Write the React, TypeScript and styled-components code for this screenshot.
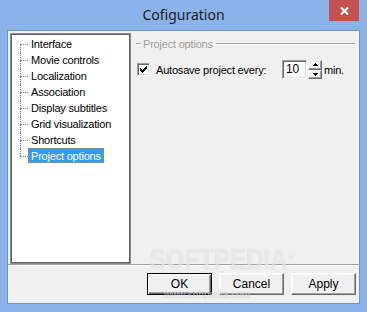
import React from "react";
import styled, { createGlobalStyle, css } from "styled-components";

const Global = createGlobalStyle`
  html, body { margin: 0; padding: 0; background: #8cb2ea; }
  body { width: 367px; height: 312px; overflow: hidden; }
  * { box-sizing: border-box; }
`;

const Window = styled.div`
  position: relative;
  width: 367px;
  height: 312px;
  background: #8cb2ea;
  display: flex;
  flex-direction: column;
  padding: 0 7px 8px 7px;
  font-family: "Liberation Sans", Arial, sans-serif;
  font-size: 11px;
  letter-spacing: -0.2px;
  color: #000;
`;

const TitleBar = styled.div`
  height: 30px;
  margin: 0 -7px;
  display: grid;
  grid-template-columns: 1fr auto 1fr;
  align-items: start;
`;

const Title = styled.div`
  grid-column: 2;
  font-family: "Noto Sans", "Open Sans", sans-serif;
  font-size: 14px;
  letter-spacing: 0;
  line-height: 29px;
  color: #1a1a1a;
`;

const CloseButton = styled.div`
  grid-column: 3;
  justify-self: end;
  margin-right: 8px;
  width: 30px;
  height: 21px;
  background: #c75050;
  display: flex;
  align-items: center;
  justify-content: center;
`;

const Client = styled.div`
  flex: 1;
  border: 1px solid #6f93cc;
  background: #f0f0f0;
  display: flex;
  flex-direction: column;
`;

const Main = styled.div`
  height: 233px;
  display: flex;
  padding: 2px 0 0 2px;
`;

const Sunken = css`
  border: 1px solid;
  border-color: #a0a0a0 #ffffff #ffffff #a0a0a0;
  box-shadow: inset 1px 1px #696969, inset -1px -1px #e3e3e3;
  background: #fff;
`;

const Tree = styled.div`
  width: 121px;
  height: 231px;
  border: 1px solid #8a8a8a;
  box-shadow: inset 0 0 0 1px #646464;
  background: #fff;
  padding: 2px;
`;

const TreeRow = styled.div<{ $first?: boolean; $last?: boolean }>`
  position: relative;
  height: 16px;
  display: flex;
  align-items: flex-start;
  padding-left: 7px;
  &::before {
    content: "";
    position: absolute;
    left: 7px;
    top: ${(p) => (p.$first ? 8 : 0)}px;
    bottom: ${(p) => (p.$last ? 8 : 0)}px;
    border-left: 1px dotted #808080;
  }
`;

const Connector = styled.span`
  width: 8px;
  margin-top: 8px;
  border-top: 1px dotted #808080;
  flex: none;
`;

const TreeLabel = styled.span<{ $selected?: boolean }>`
  height: 15px;
  padding: 1px 2px 0 2px;
  line-height: 12px;
  border: 1px solid transparent;
  white-space: nowrap;
  ${(p) =>
    p.$selected &&
    css`
      background: #3399ff;
      color: #fff;
      border: 1px dotted #c98a2a;
    `}
`;

const Panel = styled.div`
  flex: 1;
  padding: 3px 4px 0 5px;
  display: flex;
  flex-direction: column;
`;

const GroupHeader = styled.div`
  height: 16px;
  display: flex;
  align-items: center;
  color: #a0a0a0;
  line-height: 16px;
`;

const GroupLine = styled.span<{ $grow?: boolean }>`
  height: 2px;
  border-top: 1px solid #a0a0a0;
  border-bottom: 1px solid #ffffff;
  ${(p) => (p.$grow ? "flex: 1; margin-left: 3px;" : "width: 5px; margin-right: 2px;")}
`;

const OptionRow = styled.div`
  margin-top: 8px;
  height: 19px;
  display: flex;
  align-items: center;
  padding-left: 1px;
`;

const CheckBox = styled.span`
  ${Sunken}
  width: 13px;
  height: 13px;
  flex: none;
  display: flex;
  align-items: center;
  justify-content: center;
`;

const Label = styled.span<{ $width?: number }>`
  margin-left: 6px;
  white-space: nowrap;
  ${(p) => (p.$width ? `width: ${p.$width}px;` : "")}
`;

const Edit = styled.span`
  ${Sunken}
  width: 25px;
  height: 19px;
  padding-left: 3px;
  line-height: 17px;
  font-size: 12px;
`;

const Spin = styled.span`
  width: 14px;
  height: 19px;
  margin-left: 1px;
  display: flex;
  flex-direction: column;
`;

const SpinButton = styled.span`
  flex: 1;
  background: #f0f0f0;
  border: 1px solid;
  border-color: #ffffff #696969 #696969 #ffffff;
  box-shadow: inset -1px -1px #a0a0a0;
  display: flex;
  align-items: center;
  justify-content: center;
`;

const Unit = styled.span`
  margin-left: 2px;
`;

const Separator = styled.div`
  height: 2px;
  border-top: 1px solid #a0a0a0;
  border-bottom: 1px solid #ffffff;
`;

const Footer = styled.div`
  flex: 1;
  display: flex;
  justify-content: flex-end;
  align-items: flex-start;
  gap: 7px;
  padding: 7px 3px 0 0;
`;

const Button = styled.div<{ $default?: boolean }>`
  width: 65px;
  height: 22px;
  background: #f0f0f0;
  display: flex;
  align-items: center;
  justify-content: center;
  font-size: 12px;
  letter-spacing: 0;
  border: 1px solid;
  border-color: #ffffff #696969 #696969 #ffffff;
  box-shadow: inset -1px -1px #a0a0a0, inset 1px 1px #f8f8f8;
  ${(p) =>
    p.$default &&
    css`
      border-color: #000;
      box-shadow: inset 1px 1px #ffffff, inset -1px -1px #696969, inset -2px -2px #a0a0a0;
    `}
`;

const Watermark = styled.div`
  position: absolute;
  left: 150px;
  top: 243px;
  pointer-events: none;
  display: flex;
  flex-direction: column;
  align-items: center;
  font-family: "Liberation Sans", Arial, sans-serif;
  letter-spacing: 0;
`;

const WatermarkBig = styled.div`
  font-size: 30px;
  font-weight: bold;
  line-height: 32px;
  color: rgba(255, 255, 255, 0.55);
  text-shadow: 0 0 1px rgba(120, 120, 120, 0.3);
  transform: scaleX(0.8);
  transform-origin: left center;
  width: 150px;
  white-space: nowrap;
  sup {
    font-size: 8px;
    vertical-align: top;
    font-weight: normal;
  }
`;

const WatermarkSmall = styled.div`
  margin-top: 14px;
  margin-left: -36px;
  font-size: 10px;
  color: rgba(255, 255, 255, 0.6);
  text-shadow: 0 0 1px rgba(90, 90, 90, 0.35);
`;

const items = [
  "Interface",
  "Movie controls",
  "Localization",
  "Association",
  "Display subtitles",
  "Grid visualization",
  "Shortcuts",
  "Project options",
];

const Arrow = ({ up }: { up?: boolean }) => (
  <svg width="5" height="3" viewBox="0 0 5 3" shapeRendering="crispEdges">
    <path d={up ? "M2 0h1v1h1v1h1v1H0V2h1V1h1z" : "M0 0h5v1H4v1H3v1H2V2H1V1H0z"} fill="#000" />
  </svg>
);

export default function App() {
  return (
    <Window>
      <Global />
      <TitleBar>
        <Title>Cofiguration</Title>
        <CloseButton>
          <svg width="9" height="8" viewBox="0 0 9 8">
            <path d="M1 0.5 L8 7.5 M8 0.5 L1 7.5" stroke="#fff" strokeWidth="2" />
          </svg>
        </CloseButton>
      </TitleBar>
      <Client>
        <Main>
          <Tree>
            {items.map((it, i) => (
              <TreeRow key={it} $first={i === 0} $last={i === items.length - 1}>
                <Connector />
                <TreeLabel $selected={i === items.length - 1}>{it}</TreeLabel>
              </TreeRow>
            ))}
          </Tree>
          <Panel>
            <GroupHeader>
              <GroupLine />
              Project options
              <GroupLine $grow />
            </GroupHeader>
            <OptionRow>
              <CheckBox>
                <svg width="7" height="7" viewBox="0 0 7 7" shapeRendering="crispEdges">
                  <path
                    d="M6 0h1v3H6v1H5v1H4v1H3v1H2V6H1V5H0V2h1v1h1v1h1V3h1V2h1V1h1z"
                    fill="#000"
                  />
                </svg>
              </CheckBox>
              <Label $width={126}>Autosave project every:</Label>
              <Edit>10</Edit>
              <Spin>
                <SpinButton>
                  <Arrow up />
                </SpinButton>
                <SpinButton>
                  <Arrow />
                </SpinButton>
              </Spin>
              <Unit>min.</Unit>
            </OptionRow>
          </Panel>
        </Main>
        <Separator />
        <Footer>
          <Button $default>OK</Button>
          <Button>Cancel</Button>
          <Button>Apply</Button>
        </Footer>
      </Client>
      <Watermark>
        <WatermarkBig>
          SOFTPEDIA<sup>™</sup>
        </WatermarkBig>
        <WatermarkSmall>www.softpedia.com</WatermarkSmall>
      </Watermark>
    </Window>
  );
}
